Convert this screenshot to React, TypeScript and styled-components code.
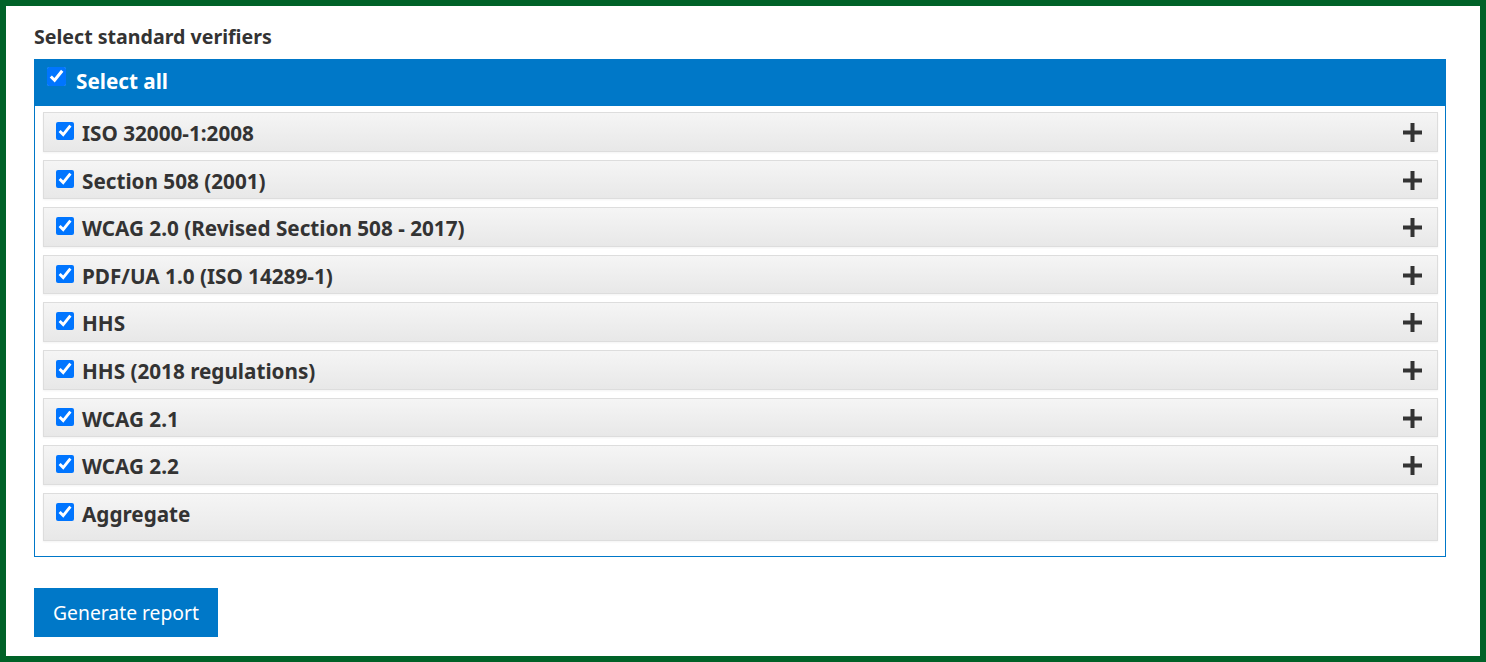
import styled, { createGlobalStyle } from "styled-components";

const GlobalStyle = createGlobalStyle`
  html, body {
    margin: 0;
    padding: 0;
    background: #ffffff;
  }
  body {
    font-family: "Noto Sans", "Open Sans", Arial, sans-serif;
    color: #333333;
  }
`;

const Frame = styled.div`
  box-sizing: border-box;
  width: 1486px;
  height: 662px;
  border: 6px solid #006228;
  padding: 0 34px 0 28px;
  background: #ffffff;
`;

const Heading = styled.h2`
  box-sizing: border-box;
  margin: 0;
  padding-top: 18px;
  height: 53px;
  font-size: 19.6px;
  font-weight: 700;
  line-height: 26px;
  color: #333333;
`;

const Panel = styled.div`
  border: 1px solid #0077c8;
`;

const PanelHeader = styled.label`
  box-sizing: border-box;
  display: flex;
  align-items: flex-start;
  gap: 10px;
  height: 46px;
  padding: 7px 0 0 12px;
  background: #0078c8;
  color: #ffffff;
  font-size: 20.7px;
  font-weight: 700;
  line-height: 28px;
`;

const List = styled.div`
  display: flex;
  flex-direction: column;
  gap: 8px;
  padding: 6px 7px 15px 8px;
`;

const Row = styled.div<{ $tall?: boolean }>`
  box-sizing: border-box;
  display: flex;
  align-items: flex-start;
  height: ${(p) => (p.$tall ? "48px" : "39.6px")};
  padding: 6px 15px 0 12px;
  border: 1px solid #dddddd;
  background: linear-gradient(to bottom, #f5f5f5 0%, #e8e8e8 100%);
  box-shadow: 0 1px 2px rgba(0, 0, 0, 0.05);
`;

const RowLabel = styled.label`
  display: flex;
  align-items: flex-start;
  gap: 8px;
  flex: 1;
  font-size: 20.7px;
  font-weight: 700;
  line-height: 28px;
  color: #333333;
`;

const Check = styled.input.attrs({ type: "checkbox" })`
  flex: none;
  width: 18px;
  height: 18px;
  margin: 3px 0 0 0;
  accent-color: #0075ff;
`;

const HeaderCheck = styled(Check)`
  width: 19px;
  height: 19px;
  margin-top: 0;
`;

const ExpandIcon = styled.svg`
  width: 19px;
  height: 19px;
  margin-top: 4px;
  flex: none;
`;

const GenerateButton = styled.button`
  margin-top: 31px;
  width: 184px;
  height: 49px;
  padding: 0;
  border: none;
  background: #0078c8;
  color: #ffffff;
  font-family: "Noto Sans", "Open Sans", Arial, sans-serif;
  font-size: 19.3px;
  font-weight: 400;
  cursor: pointer;
`;

const verifiers = [
  "ISO 32000-1:2008",
  "Section 508 (2001)",
  "WCAG 2.0 (Revised Section 508 - 2017)",
  "PDF/UA 1.0 (ISO 14289-1)",
  "HHS",
  "HHS (2018 regulations)",
  "WCAG 2.1",
  "WCAG 2.2",
];

const Plus = () => (
  <ExpandIcon viewBox="0 0 19 19">
    <rect x="7.5" y="0" width="4" height="19" fill="#333333" />
    <rect x="0" y="7.5" width="19" height="4" fill="#333333" />
  </ExpandIcon>
);

export default function App() {
  return (
    <>
      <GlobalStyle />
      <Frame>
        <Heading>Select standard verifiers</Heading>
        <Panel>
          <PanelHeader>
            <HeaderCheck defaultChecked />
            Select all
          </PanelHeader>
          <List>
            {verifiers.map((name) => (
              <Row key={name}>
                <RowLabel>
                  <Check defaultChecked />
                  {name}
                </RowLabel>
                <Plus />
              </Row>
            ))}
            <Row $tall>
              <RowLabel>
                <Check defaultChecked />
                Aggregate
              </RowLabel>
            </Row>
          </List>
        </Panel>
        <GenerateButton>Generate report</GenerateButton>
      </Frame>
    </>
  );
}
